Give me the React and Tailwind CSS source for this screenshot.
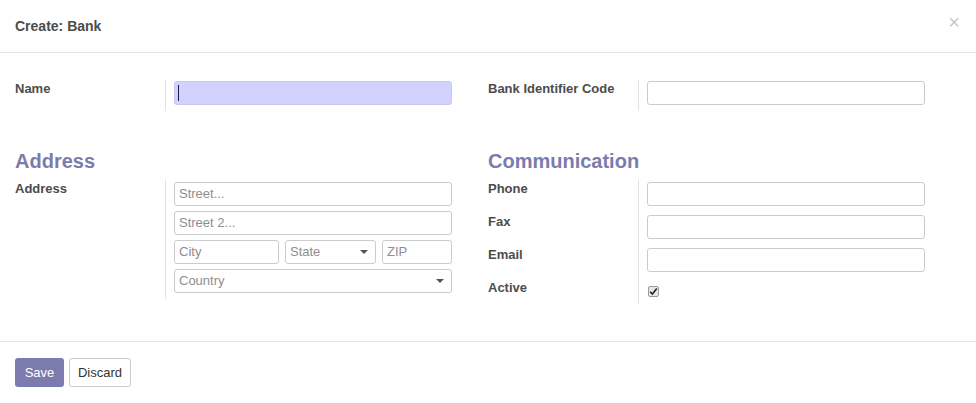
import React from "react";

const font = { fontFamily: '"Liberation Sans", Arial, Helvetica, sans-serif' };

function Label({ children }) {
  return (
    <div className="w-[150px] shrink-0 text-[13px] leading-[18px] font-bold text-[#4c4c4c]">
      {children}
    </div>
  );
}

function Box({ className = "", children }) {
  return (
    <div
      className={
        "h-[24px] border border-[#cccccc] rounded-[3px] bg-white flex items-center px-[4px] text-[13px] text-[#8e8e8e] " +
        className
      }
    >
      {children}
    </div>
  );
}

function Caret() {
  return (
    <span className="ml-auto mr-[1px] w-0 h-0 border-l-[4px] border-r-[4px] border-t-[4px] border-l-transparent border-r-transparent border-t-[#555555]" />
  );
}

function Row({ label, children, cellClass = "pt-[1px] pb-[6px]" }) {
  return (
    <div className="flex">
      <Label>{label}</Label>
      <div className={"border-l border-[#e2e2e2] pl-[8px] pr-[36px] " + cellClass}>
        <div className="w-[278px]">{children}</div>
      </div>
    </div>
  );
}

function Heading({ children }) {
  return (
    <div className="h-[28px] text-[20px] leading-[28px] font-bold text-[#7c7bad] mb-[5px]">
      {children}
    </div>
  );
}

export default function App() {
  return (
    <div className="w-[976px] h-[403px] bg-white flex flex-col" style={font}>
      <div className="h-[53px] shrink-0 border-b border-[#e5e5e5] flex items-center justify-between pl-[15px] pr-[16px]">
        <div className="text-[14px] font-bold text-[#4c4c4c] pt-[1px]">Create: Bank</div>
        <div className="text-[20px] leading-none text-[#c8c8c8] -mt-[8px]">×</div>
      </div>

      <div className="flex-1 px-[15px] pt-[27px] grid grid-cols-[473px_473px]">
        {/* Left column */}
        <div className="flex flex-col">
          <Row label="Name">
            <div className="h-[24px] rounded-[3px] bg-[#d2d2ff] border border-[#c8c8f0] flex items-center pl-[3px]">
              <span className="w-[1px] h-[16px] bg-[#1a1a40]" />
            </div>
          </Row>
          <div className="h-[36px]" />
          <Heading>Address</Heading>
          <Row label="Address" cellClass="pt-[2px] pb-[6px]">
            <div className="flex flex-col gap-[5px]">
              <Box>Street...</Box>
              <Box>Street 2...</Box>
              <div className="flex gap-[6px]">
                <Box className="w-[105px]">City</Box>
                <Box className="w-[91px] pr-[6px]">
                  State
                  <Caret />
                </Box>
                <Box className="w-[70px]">ZIP</Box>
              </div>
              <Box className="pr-[6px]">
                Country
                <Caret />
              </Box>
            </div>
          </Row>
        </div>

        {/* Right column */}
        <div className="flex flex-col">
          <Row label="Bank Identifier Code">
            <Box />
          </Row>
          <div className="h-[36px]" />
          <Heading>Communication</Heading>
          <div className="flex flex-col">
            <Row label="Phone" cellClass="pt-[2px] pb-[7px]">
              <Box />
            </Row>
            <Row label="Fax" cellClass="pt-[2px] pb-[7px]">
              <Box />
            </Row>
            <Row label="Email" cellClass="pt-[2px] pb-[7px]">
              <Box />
            </Row>
            <Row label="Active" cellClass="pt-[7px] pb-[7px]">
              <div className="w-[11px] h-[11px] ml-[1px] border border-[#9a9a9a] rounded-[2px] bg-[#e6e6e6] flex items-center justify-center">
                <svg width="9" height="9" viewBox="0 0 9 9">
                  <path d="M1.2 4.8 L3.4 7 L7.8 1.6" fill="none" stroke="#222" strokeWidth="1.6" />
                </svg>
              </div>
            </Row>
          </div>
        </div>
      </div>

      <div className="h-[62px] shrink-0 border-t border-[#e5e5e5] flex items-center gap-[5px] px-[15px]">
        <button className="h-[29px] w-[49px] rounded-[3px] bg-[#7c7bad] text-white text-[13px]">
          Save
        </button>
        <button className="h-[29px] w-[62px] rounded-[3px] border border-[#cccccc] bg-white text-[#333333] text-[13px]">
          Discard
        </button>
      </div>
    </div>
  );
}
